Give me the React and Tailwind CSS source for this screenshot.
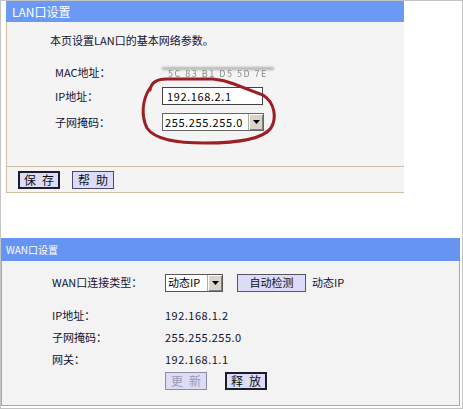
import React from "react";

const font = "font-['Noto_Sans_CJK_SC',sans-serif]";

function Arrow() {
  return (
    <div className="w-[15px] h-full bg-[#d8d4cc] border-l border-[#b0aca4] flex items-center justify-center shadow-[inset_1px_1px_0_#fff,inset_-1px_-1px_0_#808080]">
      <svg width="7" height="4" viewBox="0 0 7 4">
        <polygon points="0,0 7,0 3.5,4" fill="#000" />
      </svg>
    </div>
  );
}

function Btn({ children, thick, disabled, w = "w-[42px]" }) {
  return (
    <div
      className={`${w} h-[18px] flex items-center justify-center text-[12px] leading-none whitespace-pre bg-[#dcdcf6] ${
        thick
          ? "border-2 border-[#1c1c2c]"
          : disabled
          ? "border border-[#8c8ca4] text-[#9a9ab4]"
          : "border border-[#4a4a66]"
      } ${disabled ? "" : "text-[#111]"}`}
    >
      {children}
    </div>
  );
}

export default function App() {
  return (
    <div
      className={`${font} w-[463px] h-[409px] bg-white border border-[#c4c4c4] overflow-hidden relative text-[11px] text-[#121230]`}
    >
      {/* LAN panel */}
      <div className="ml-[5px] w-[398px]">
        <div className="h-[21px] bg-[#6a9af6] flex items-center pl-[6px] text-white text-[12px]">
          LAN口设置
        </div>
        <div className="bg-[#f4f4f4] border-l border-[#cdbf9f] relative">
          <div className="h-[144px] pl-[48px] pt-[9px]">
            <div className="h-[18px] flex items-center text-[11px] -ml-[5px]">
              本页设置LAN口的基本网络参数。
            </div>
            <div className="h-[20px] mt-[13px] flex items-center">
              <div className="w-[107px]">MAC地址：</div>
              <div className="relative w-[112px] h-[12px] -mt-[1px]">
                <div className="absolute left-0 right-0 top-[1px] h-[3px] bg-[#b4b4b4] blur-[1px]" />
                <div className="absolute left-[6px] top-[3px] text-[9px] text-[#888] tracking-[1.5px] blur-[0.6px] leading-none whitespace-nowrap">
                  5C 83 B1 D5 5D 7E
                </div>
              </div>
            </div>
            <div className="h-[18px] mt-[5px] flex items-center">
              <div className="w-[107px]">IP地址：</div>
              <div className="w-[101px] h-[18px] bg-white border border-[#444] flex items-center pl-[4px] text-[11px] tracking-[0.6px] text-black">
                192.168.2.1
              </div>
            </div>
            <div className="h-[18px] mt-[8px] flex items-center">
              <div className="w-[107px]">子网掩码：</div>
              <div className="w-[102px] h-[18px] bg-white border border-[#666] flex items-stretch text-[11px] text-black">
                <div className="flex-1 flex items-center pl-[2px] tracking-[0.6px]">255.255.255.0</div>
                <Arrow />
              </div>
            </div>
          </div>
          <div className="h-[27px] border-t border-b border-[#cdbf9f] flex items-center pl-[11px] gap-[12px]">
            <Btn thick>{"保\u2002存"}</Btn>
            <Btn>{"帮\u2002助"}</Btn>
          </div>
          <svg
            className="absolute left-0 top-0 pointer-events-none"
            width="398"
            height="190"
            viewBox="6 22 398 190"
          >
            <path
              d="M149 90 C150 83 156 79 166 79 L212 79 C222 80 228 82 233 84 L262 95 C274 103 276 118 270 128 C262 139 236 143 204 143 C176 143 154 140 146 128 C140 116 141 100 149 88"
              fill="none"
              stroke="#9c1f25"
              strokeWidth="3"
              strokeLinecap="round"
            />
          </svg>
        </div>
      </div>

      {/* WAN panel */}
      <div className="mt-[45px] w-[459px]">
        <div className="h-[23px] bg-[#6594f2] flex items-center pl-[5px] text-white text-[10px]">
          WAN口设置
        </div>
        <div className="h-[145px] bg-[#f3f3f3] border-l border-r border-b border-[#a8a8a8] pl-[50px] pt-[12px]">
          <div className="h-[19px] flex items-center">
            <div className="w-[113px]">WAN口连接类型：</div>
            <div className="w-[58px] h-[18px] bg-white border border-[#555] flex items-stretch text-[11px] text-black">
              <div className="flex-1 flex items-center pl-[2px]">动态IP</div>
              <Arrow />
            </div>
            <div className="ml-[14px] w-[69px] h-[18px] bg-[#dcdcf8] border border-[#555566] flex items-center justify-center text-[11px] text-[#111]">
              自动检测
            </div>
            <div className="ml-[6px]">动态IP</div>
          </div>
          <div className="h-[18px] mt-[14px] flex items-center">
            <div className="w-[113px]">IP地址：</div>
            <div className="tracking-[0.5px]">192.168.1.2</div>
          </div>
          <div className="h-[18px] mt-[4px] flex items-center">
            <div className="w-[113px]">子网掩码：</div>
            <div className="tracking-[0.5px]">255.255.255.0</div>
          </div>
          <div className="h-[18px] mt-[4px] flex items-center">
            <div className="w-[113px]">网关：</div>
            <div className="tracking-[0.5px]">192.168.1.1</div>
          </div>
          <div className="flex items-center mt-[4px] pl-[113px] gap-[18px]">
            <Btn disabled>{"更\u2002新"}</Btn>
            <Btn thick>{"释\u2002放"}</Btn>
          </div>
        </div>
      </div>
    </div>
  );
}
